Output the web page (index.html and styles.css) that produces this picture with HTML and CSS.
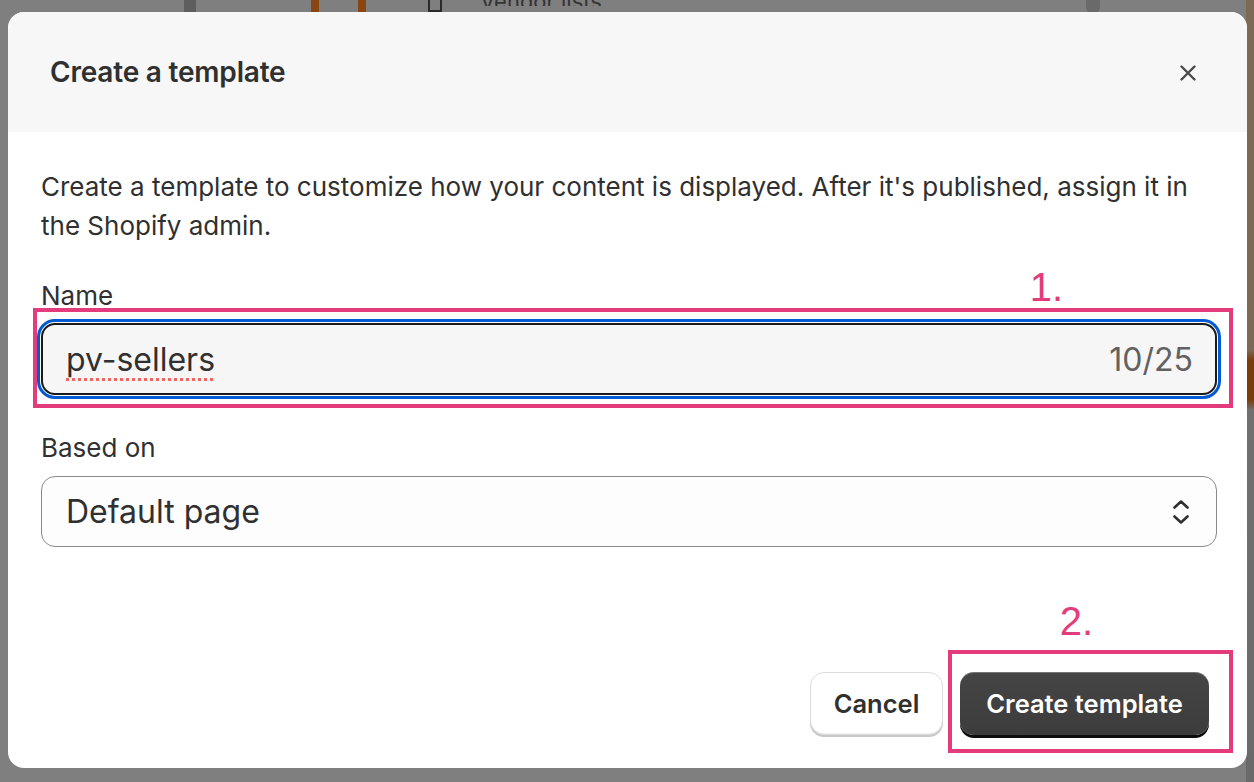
FILE: index.html
```html
<!DOCTYPE html>
<html lang="en">
<head>
    <meta charset="UTF-8">
    <meta name="viewport" content="width=device-width, initial-scale=1.0">
    <title>Create a template</title>
    <link rel="stylesheet" href="styles.css">
</head>
<body>
    <div class="backdrop">
        <div class="bd-rail"></div>
        <div class="bd-stripe bd-stripe-1"></div>
        <div class="bd-stripe bd-stripe-2"></div>
        <div class="bd-icon"></div>
        <div class="bd-text">Vendor lists</div>
        <div class="bd-scroll"></div>
        <div class="bd-side"></div>
    </div>

    <div class="modal">
        <div class="modal-header">
            <h2>Create a template</h2>
            <button class="close-btn" aria-label="Close">
                <svg width="16" height="16" viewBox="0 0 16 16">
                    <path d="M1.5 1.5 L14.5 14.5 M14.5 1.5 L1.5 14.5" stroke="#4a4a4a" stroke-width="2.4" stroke-linecap="round" fill="none"/>
                </svg>
            </button>
        </div>

        <div class="modal-body">
            <p class="intro">Create a template to customize how your content is displayed. After it's published, assign it in the Shopify admin.</p>

            <label class="label">Name</label>
            <div class="field-wrap">
                <div class="field">
                    <span class="field-value">pv-sellers</span>
                    <span class="counter">10/25</span>
                </div>
                <div class="note note-1"><span class="note-num">1.</span></div>
            </div>

            <label class="label label-gap">Based on</label>
            <div class="select">
                <span>Default page</span>
                <svg width="18" height="28" viewBox="0 0 18 28">
                    <path d="M2.5 9.5 L9 3.5 L15.5 9.5 M2.5 18.5 L9 24.5 L15.5 18.5" stroke="#303030" stroke-width="2.6" stroke-linecap="round" stroke-linejoin="round" fill="none"/>
                </svg>
            </div>
        </div>

        <div class="modal-footer">
            <button class="btn btn-cancel">Cancel</button>
            <div class="primary-wrap">
                <button class="btn btn-primary">Create template</button>
                <div class="note note-2"><span class="note-num">2.</span></div>
            </div>
        </div>
    </div>
</body>
</html>
```

FILE: styles.css
```css
body {
    margin: 0;
    height: 782px;
    overflow: hidden;
    background-color: #7f7f7f;
    font-family: Inter, "Noto Sans", Arial, sans-serif;
    color: #303030;
    padding: 12px 7px 0 8px;
    box-sizing: border-box;
    position: relative;
}

/* dimmed page behind the dialog */
.backdrop {
    position: absolute;
    inset: 0;
    z-index: 0;
}
.bd-rail {
    position: absolute;
    left: 184px;
    top: 0;
    width: 12px;
    height: 14px;
    background: #5e5e5e;
}
.bd-stripe {
    position: absolute;
    top: 0;
    height: 14px;
    width: 8px;
    background: #8a4510;
}
.bd-stripe-1 { left: 311px; }
.bd-stripe-2 { left: 358px; }
.bd-icon {
    position: absolute;
    left: 428px;
    top: -4px;
    width: 10px;
    height: 14px;
    border: 2px solid #2a2a2a;
    border-top: none;
}
.bd-text {
    position: absolute;
    left: 480px;
    top: -6px;
    font-size: 22px;
    line-height: 14px;
    height: 12px;
    overflow: hidden;
    color: #333;
}
.bd-scroll {
    position: absolute;
    left: 1086px;
    top: 0;
    width: 14px;
    height: 14px;
    border-radius: 0 0 7px 7px;
    background: #6a6a6a;
}
.bd-side {
    position: absolute;
    right: 0;
    top: 0;
    width: 8px;
    height: 782px;
    background: linear-gradient(#7d6a55 0, #7d6a55 350px, #7a3e0a 360px, #7a3e0a 400px, #707070 410px, #6a6a6a 782px);
}

.modal {
    position: relative;
    z-index: 1;
    width: 1239px;
    height: 756px;
    background: #fff;
    border-radius: 16px;
    display: flex;
    flex-direction: column;
}
.modal-header {
    height: 120px;
    background: #f7f7f7;
    border-radius: 16px 16px 0 0;
    display: flex;
    align-items: center;
    justify-content: space-between;
    padding: 0 51px 0 42px;
}
.modal-header h2 {
    margin: 0;
    font-size: 28px;
    font-weight: 600;
    letter-spacing: -0.2px;
    color: #303030;
}
.close-btn {
    border: none;
    background: none;
    padding: 0;
    width: 16px;
    height: 16px;
    display: flex;
    margin-top: 1px;
    cursor: pointer;
}

.modal-body {
    flex: 1;
    padding: 35px 30px 0 33px;
    display: flex;
    flex-direction: column;
}
.intro {
    margin: 0 0 36px 0;
    font-size: 26px;
    line-height: 39px;
    color: #303030;
}
.label {
    font-size: 26px;
    line-height: 30px;
    margin-bottom: 12px;
    color: #303030;
}
.label-gap {
    margin-top: 38px;
    margin-bottom: 13px;
}

.field-wrap {
    position: relative;
}
.field {
    height: 72px;
    box-sizing: border-box;
    border: 2px solid #1a1a1a;
    border-radius: 14px;
    background: #f6f6f6;
    outline: 3px solid #005bd3;
    outline-offset: 1px;
    display: flex;
    align-items: center;
    justify-content: space-between;
    padding: 0 22px 0 23px;
    font-size: 32px;
}
.field-value {
    color: #303030;
    text-decoration: underline dotted #f06464;
    text-decoration-thickness: 3px;
    text-underline-offset: 7px;
}
.counter {
    color: #616161;
}

.select {
    height: 71px;
    box-sizing: border-box;
    border: 1px solid #8a8a8a;
    border-radius: 14px;
    background: #fdfdfd;
    display: flex;
    align-items: center;
    justify-content: space-between;
    padding: 0 26px 0 24px;
    font-size: 32px;
    color: #303030;
}

.modal-footer {
    display: flex;
    justify-content: flex-end;
    align-items: center;
    gap: 17px;
    padding: 0 38px 33px 0;
}
.btn {
    height: 63px;
    border-radius: 14px;
    font-family: inherit;
    font-size: 25.5px;
    font-weight: 600;
    cursor: pointer;
}
.btn-cancel {
    width: 133px;
    background: #fff;
    color: #303030;
    border: 1px solid #dcdcdc;
    box-shadow: 0 -1px 0 #f0f0f0 inset, 0 2px 0 #c8c8c8;
}
.primary-wrap {
    position: relative;
}
.btn-primary {
    width: 249px;
    background: linear-gradient(#454545, #3c3c3c);
    color: #fff;
    border: none;
    box-shadow: 0 1px 0 rgba(255, 255, 255, 0.25) inset, 0 3px 0 #0d0d0d;
}

/* pink annotation boxes drawn over the screenshot */
.note {
    position: absolute;
    border: 4px solid #e33b7b;
    pointer-events: none;
}
.note-1 {
    left: -8px;
    top: -15px;
    right: -16px;
    bottom: -13px;
}
.note-2 {
    left: -12px;
    top: -22px;
    right: -24px;
    bottom: -18px;
}
.note-num {
    position: absolute;
    bottom: 100%;
    font-family: "Liberation Sans", Arial, sans-serif;
    font-size: 40px;
    line-height: 40px;
    color: #e33b7b;
}
.note-1 .note-num { right: 166px; margin-bottom: 5px; }
.note-2 .note-num { right: 136px; margin-bottom: 13px; }
```
